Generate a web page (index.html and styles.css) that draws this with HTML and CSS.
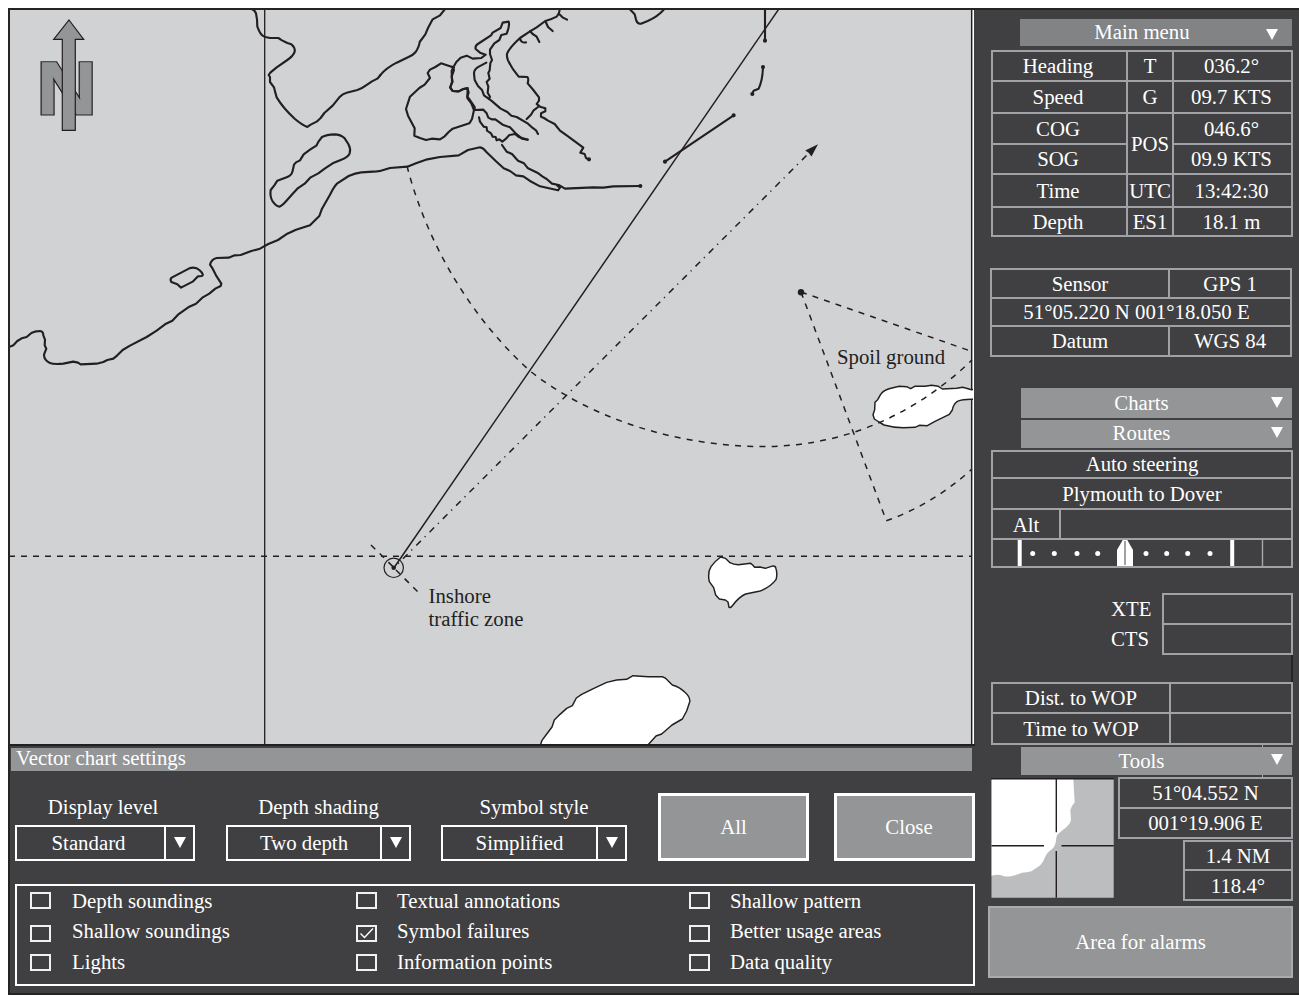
FILE: index.html
```html
<!DOCTYPE html>
<html lang="en">
<head>
<meta charset="utf-8">
<title>Vector chart display</title>
<link rel="stylesheet" href="styles.css">
</head>
<body>
<main class="ecdis">
  <section class="left">
    <svg class="map" width="963" height="734" viewBox="10 10 963 734">
      <!-- coastline, western half -->
      <g class="coast" transform="scale(.33333)">
        <path d="M752 26Q765 30 768 40L771 58 772 80 777 92Q784 108 796 111L810 114 835 114 846 121 862 129 874 133Q886 142 884 155Q880 168 862 180L830 202 811 218 806 225 810 231 810 246 822 262 826 278 830 292Q850 325 885 357Q905 374 922 381L932 374 950 365 962 354 973 339 998 317 1018 292Q1028 281 1040 278L1072 270Q1085 266 1098 256L1116 244 1132 236 1141 226"/>
        <path d="M966 411Q980 404 1003 403Q1022 403 1034 415L1045 432Q1053 446 1049 460Q1045 471 1024 479L998 490 974 506 955 520 932 532 914 551 892 566 874 586 858 604Q846 618 838 620Q828 618 818 604Q809 590 812 570L823 556 832 542 862 531Q876 526 878 512L882 494 888 487 900 481 911 463 930 449 949 437 956 424Z"/>
        <path d="M28 1041L40 1036 52 1023 65 1015 80 1011 94 999 104 995 120 993Q130 994 130 1006L135 1019 134 1036 139 1046 132 1064Q132 1080 150 1089Q162 1094 190 1091L220 1085 234 1088 242 1093 290 1091 310 1086 322 1080 340 1076 352 1066 368 1050 390 1037 440 1011 470 992 498 971 517 962 534 944 568 920 588 911 607 893 628 881 646 866 662 858 664 851 648 826 638 806 630 794Q634 778 650 774L686 773 704 766 722 765 754 753 780 746 805 732 834 720 862 701 888 689 930 676 958 648 966 626 990 584Q1002 560 1012 550L1046 528Q1066 519 1084 517L1130 514 1140 513"/>
        <path d="M515 833L568 805Q586 799 599 811Q614 825 605 828L594 829 578 845 543 863 532 853 514 846Q509 838 515 833Z"/>
      </g>
      <!-- harbour and eastern coastline -->
      <g class="coast" transform="translate(380 0) scale(.33333)">
        <path d="M0 226Q20 203 50 188L84 172Q100 165 107 156Q118 139 119 126L136 103 144 84 158 58 180 46 196 26"/>
        <path d="M0 513L30 504 82 500 108 490 142 478 180 471 236 466 264 450 300 442Q310 443 320 457L348 484 371 505 390 513 408 526 430 529 450 543 480 559 534 571 540 563 532 557"/>
        <path d="M366 435L380 455 396 462 414 482 432 490 444 505 472 518 488 530 500 537 516 551 536 555 555 566 640 562 670 563 700 559 780 558"/>
        <path d="M222 203L210 199 183 190 166 201 150 209 143 219 150 234 145 240 134 254 118 264 90 290 78 327 84 347 104 385 103 407 120 414 138 420 155 416 180 418 194 409 206 396 218 386 268 370 276 357 282 330 274 310 262 294 263 264 250 267 236 274 218 273 211 263 216 246 215 212 220 202 229 186 242 173 260 167 278 176 304 174 317 164 300 158 287 147Q284 136 298 129L333 106 338 98 362 84 368 68 386 65Q390 77 380 101L364 105 358 120 343 130 330 149 330 162 336 180 331 190 329 211 325 219 329 236 320 246 325 260 323 278 330 290 327 296"/>
        <path d="M216 200L222 210 215 230 218 245 210 262 218 273 236 274 250 267 262 265 266 277 262 290 270 300 284 321 284 330 310 329 320 340 325 353 335 358 346 358 368 374 390 382 406 399 426 416 443 419"/>
        <path d="M297 352L300 365 311 380 320 382 321 392 333 400 338 410 347 411 350 421 358 418 367 425 378 416 388 405 405 402 416 411 443 419"/>
        <path d="M319 188L298 199Q282 207 282 220L284 240 294 258 306 270 312 286 334 302 362 326 382 336 394 347 410 351 444 371 458 384 468 391 474 402"/>
        <path d="M539 26Q540 38 530 50Q515 58 496 63L470 82 450 94 420 114Q391 141 383 157Q378 165 384 181Q396 207 416 230L442 231Q447 236 443 250L460 270 477 292 477 302 470 312 480 320 496 325 496 334 483 340 483 350 492 354 504 362 524 372 540 392 560 406 610 443 601 458 614 462 618 474 627 479M478 318L460 332 453 344 440 357M420 114Q422 130 438 127M450 93L458 102 470 110 478 126M496 63L504 81 518 93M540 44L549 53 561 59"/>
        <path d="M748 26L764 43 769 62Q773 73 783 71L803 63Q835 49 853 27"/>
        <circle cx="781" cy="558" r="3"/><circle cx="627" cy="478" r="3"/>
      </g>
      <g class="coast" transform="translate(600 0) scale(.33333)">
        <path d="M495 26V122M489 201Q488 240 476 266L461 272 457 281M195 485L401 346"/>
        <circle cx="495" cy="122" r="3"/><circle cx="489" cy="201" r="3"/><circle cx="457" cy="282" r="3"/><circle cx="195" cy="485" r="3"/><circle cx="401" cy="346" r="3"/>
      </g>
      <!-- shoal areas -->
      <g class="shoal" transform="translate(680 320) scale(.33333)">
        <path d="M890 208L875 209 848 202 830 205 787 207 775 199 755 196 735 199 704 199 692 206 680 200 658 199 636 204Q612 209 602 223L593 239 585 247 584 269 579 284 583 297 597 306 612 315Q640 323 670 323L705 322 718 316 742 317 765 304 808 283 817 270Q820 252 832 244Q850 237 880 238H890"/>
        <path d="M122 711L136 715 150 728Q160 734 175 734L212 730 218 735 224 742 240 741 256 745 274 739Q286 735 288 746Q293 763 288 779Q270 803 237 814L197 822Q177 831 159 855Q152 865 147 862L144 846 136 840 118 837 107 825 101 803 88 785Q82 758 93 740Q104 724 122 711Z"/>
      </g>
      <path class="shoal" transform="translate(340 520) scale(.33333)" d="M601 676L606 661 618 645 636 621 643 600 660 583 680 565 697 557 709 534 725 523 760 506 800 487Q830 478 860 478L879 467 925 470 967 470Q977 472 984 482L997 495Q1020 502 1034 516Q1052 532 1049 546L1040 573 1027 597 996 615 965 642 948 648 923 676"/>
      <!-- graticule, range arcs and light sector -->
      <path class="thin" d="M264.7 10V744M971.6 10V390M971.6 399V744"/>
      <path class="dash grat" d="M10 556.2H972"/>
      <path class="dash" d="M407 166C426 240 468 315 530 371C592 420 680 446.5 763 446.5C850 446.5 920 410 972 360"/>
      <path class="dash" d="M801 292L972 351.5"/>
      <path class="dash" d="M801 292L886.3 520.7"/>
      <path class="dash" d="M886.3 520.7Q932 505 972 469"/>
      <circle cx="801" cy="292.3" r="3.2" fill="#231f20"/>
      <!-- own ship with heading line and course vector -->
      <path class="vector" d="M394 567.7L778.5 9.5"/>
      <path class="dash course" d="M806.5 155.5L394 567.7"/>
      <path fill="#231f20" d="M818 144.3L805.2 150.5 808.6 152.8 811.5 156.5Z"/>
      <path class="dash" d="M371 545L394 567.7M396 570L418 592"/>
      <circle cx="393.7" cy="567.8" r="9.7" fill="none" stroke="#231f20" stroke-width="1.2"/>
      <circle cx="393.7" cy="567.8" r="2.3" fill="#231f20"/>
      <!-- north marker -->
      <text class="north rim" aria-hidden="true" x="36.8" y="114.3" textLength="59.8" lengthAdjust="spacingAndGlyphs">N</text>
      <text class="north" x="36.8" y="114.3" textLength="59.8" lengthAdjust="spacingAndGlyphs">N</text>
      <path class="arrow" d="M69 20L83.7 39.3H75.3V130.3H62.3V39.3H53.7Z"/>
      <text class="note" x="837" y="363.7">Spoil ground</text>
      <text class="note" x="428.5" y="603">Inshore</text>
      <text class="note" x="428.5" y="626">traffic zone</text>
    </svg>

    <section class="settings">
      <h2 class="title">Vector chart settings</h2>
      <div class="controls">
        <div class="field level"><span class="label">Display level</span>
          <div class="select"><span>Standard</span><i><svg class="tri" viewBox="0 0 12 11"><path d="M0 0H12L6 11Z"/></svg></i></div></div>
        <div class="field shading"><span class="label">Depth shading</span>
          <div class="select"><span>Two depth</span><i><svg class="tri" viewBox="0 0 12 11"><path d="M0 0H12L6 11Z"/></svg></i></div></div>
        <div class="field style"><span class="label">Symbol style</span>
          <div class="select"><span>Simplified</span><i><svg class="tri" viewBox="0 0 12 11"><path d="M0 0H12L6 11Z"/></svg></i></div></div>
        <button class="btn all">All</button>
        <button class="btn close">Close</button>
      </div>
      <div class="options">
        <label class="first"><b class="box"></b>Depth soundings</label>
        <label><b class="box"></b>Textual annotations</label>
        <label><b class="box"></b>Shallow pattern</label>
        <label class="first mid"><b class="box"></b>Shallow soundings</label>
        <label class="mid"><b class="box"><svg width="18" height="13" viewBox="0 0 18 13"><path d="M2.5 6.5L6.5 10.5 15 1.5" fill="none" stroke="#fff" stroke-width="1.4"/></svg></b>Symbol failures</label>
        <label class="mid"><b class="box"></b>Better usage areas</label>
        <label class="first low"><b class="box"></b>Lights</label>
        <label class="low"><b class="box"></b>Information points</label>
        <label class="low"><b class="box"></b>Data quality</label>
      </div>
    </section>
  </section>

  <aside class="panel">
    <div class="bar main"><span>Main menu</span><svg class="tri" viewBox="0 0 12 11"><path d="M0 0H12L6 11Z"/></svg></div>
    <div class="grid nav">
      <div class="name">Heading</div><div>T</div><div class="val">036.2°</div>
      <div class="name">Speed</div><div>G</div><div class="val">09.7 KTS</div>
      <div class="name">COG</div><div class="pos">POS</div><div class="val">046.6°</div>
      <div class="name">SOG</div><div class="val">09.9 KTS</div>
      <div class="name">Time</div><div>UTC</div><div class="val">13:42:30</div>
      <div class="name">Depth</div><div>ES1</div><div class="val">18.1 m</div>
    </div>
    <div class="grid sensor">
      <div>Sensor</div><div>GPS 1</div>
      <div class="fix">51°05.220 N 001°18.050 E</div>
      <div>Datum</div><div>WGS 84</div>
    </div>
    <div class="bar charts"><span>Charts</span><svg class="tri" viewBox="0 0 12 11"><path d="M0 0H12L6 11Z"/></svg></div>
    <div class="bar routes"><span>Routes</span><svg class="tri" viewBox="0 0 12 11"><path d="M0 0H12L6 11Z"/></svg></div>
    <div class="grid auto">
      <div class="wide up">Auto steering</div>
      <div class="wide">Plymouth to Dover</div>
      <div class="down">Alt</div><div></div>
      <div class="wide">
        <svg width="298" height="26" viewBox="993 540 298 26">
          <path d="M1262.5 540V566" stroke="#a7a9ac" stroke-width="1.4"/>
          <path d="M1019.7 540V566M1232.2 540V566" stroke="#fff" stroke-width="4"/>
          <path d="M1122.7 540H1127.3L1133 550V566H1117V550Z" fill="#fff"/>
          <path d="M1125 541V565" stroke="#77797b" stroke-width="1.4"/>
          <g fill="#fff"><circle cx="1032.7" cy="553.6" r="2.5"/><circle cx="1054.3" cy="553.6" r="2.5"/><circle cx="1077" cy="553.6" r="2.5"/><circle cx="1097.7" cy="553.6" r="2.5"/><circle cx="1146" cy="553.6" r="2.5"/><circle cx="1166.7" cy="553.6" r="2.5"/><circle cx="1187.7" cy="553.6" r="2.5"/><circle cx="1210" cy="553.6" r="2.5"/></g>
        </svg>
      </div>
    </div>
    <div class="track">
      <div class="names"><span>XTE</span><span>CTS</span></div>
      <div class="grid pair"><div></div><div></div></div>
    </div>
    <div class="edge"></div>
    <div class="grid wop"><div>Dist. to WOP</div><div></div><div>Time to WOP</div><div></div></div>
    <div class="tick"></div>
    <div class="bar tools"><span>Tools</span><svg class="tri" viewBox="0 0 12 11"><path d="M0 0H12L6 11Z"/></svg></div>
    <div class="tick"></div>
    <div class="bottom">
      <svg class="inset" width="123" height="121" viewBox="991 777 123 121">
        <path d="M991.5 779H1113.7V897.7H991.5Z" fill="#bbbdbf"/>
        <path transform="translate(970 640) scale(.33333)" d="M65 417H310L314 487Q303 500 301 510L303 540Q300 555 278 570L262 584Q258 590 258 602Q255 622 243 630Q232 636 225 652Q218 670 208 678L184 694Q170 698 156 698L135 706Q115 712 100 708Q85 701 65 707Z" fill="#fff"/>
        <path d="M991 778.8H1114" stroke="#231f20" stroke-width="1.5"/>
        <path d="M1056.3 779V832.3M1056.3 851V897.7M991.5 845.7H1044M1061.5 845.7H1113.7" stroke="#231f20" stroke-width="1.4"/>
      </svg>
      <div class="reads">
        <div class="grid pair latlon"><div>51°04.552 N</div><div>001°19.906 E</div></div>
        <div class="grid pair range"><div>1.4 NM</div><div>118.4°</div></div>
      </div>
    </div>
    <div class="alarm">Area for alarms</div>
  </aside>
</main>
</body>
</html>
```
FILE: styles.css
```css
* { box-sizing: border-box; }
body {
  margin: 0;
  background: #fff;
  color: #fff;
  font: 20.8px/24px "Liberation Serif", "Times New Roman", serif;
  overflow: hidden;
}
.ecdis {
  display: grid;
  grid-template-columns: 965px 324px;
  margin: 8px 0 0 8px;
  width: 1291px;
  height: 987px;
  background: #404042;
  border: 2px solid #252324;
  border-right: 0;
}

/* chart */
.map {
  display: block;
  box-sizing: content-box;
  background: #d1d2d4;
  border-right: 1px solid #fff;
}
.coast { fill: none; stroke: #231f20; stroke-width: 6.4; stroke-linejoin: round; stroke-linecap: round; }
.coast circle { fill: #231f20; }
.shoal { fill: #fff; stroke: #231f20; stroke-width: 4.4; stroke-linejoin: round; }
.thin { fill: none; stroke: #231f20; stroke-width: 1.3; }
.vector { stroke: #231f20; stroke-width: 1.5; }
.dash { fill: none; stroke: #231f20; stroke-width: 1.5; stroke-dasharray: 6 6.2; }
.grat { stroke-dasharray: 6 6; stroke-dashoffset: 1px; }
.course { stroke-dasharray: 6.5 5.7 1.2 5.4; }
.north { font: bold 73.7px "Liberation Sans", Arial, sans-serif; fill: #939597; stroke: #939597; stroke-width: 1; }
.rim { stroke: #231f20; stroke-width: 3.2; }
.arrow { fill: #939597; stroke: #231f20; stroke-width: 1.2; }
.note { fill: #231f20; }

/* chart settings */
.settings { border-top: 2px solid #231f20; width: 965px; }
.title {
  margin: 2px 3px 0 1px;
  height: 23px;
  padding-left: 5px;
  background: #939597;
  font-size: 20.8px;
  font-weight: 400;
  line-height: 19px;
}
.controls { display: flex; margin-top: 22px; padding-left: 5px; height: 68px; }
.field { display: flex; flex-direction: column; gap: 6px; padding-top: 2px; }
.label { text-align: center; }
.level { width: 180px; }
.level .label { padding-right: 4px; }
.shading { width: 185px; margin-left: 31px; }
.style { width: 186px; margin-left: 30px; }
.select { display: flex; height: 36px; border: 2px solid #fff; line-height: 32px; }
.select span { flex: 1; text-align: center; }
.level .select span { padding-right: 4px; }
.select i { display: flex; align-items: center; justify-content: center; width: 29px; border-left: 2px solid #fff; }
.select .tri { margin: -1px 0 0 1px; }
.tri { width: 12px; height: 11px; fill: #fff; flex: none; }
.btn {
  padding: 0;
  border: 3px solid #fff;
  background: #939597;
  color: #fff;
  font: inherit;
}
.all { width: 151px; margin-left: 31px; }
.close { width: 141px; margin-left: 25px; padding-left: 9px; }
.options {
  display: grid;
  grid-template-columns: 326px 333px 1fr;
  grid-template-rows: 30px 31px 30px;
  margin: 23px 0 0 5px;
  height: 102px;
  border: 2px solid #fff;
  padding: 3px 0 0 13px;
}
.options label { display: flex; align-items: flex-start; }
.box { width: 21px; height: 17px; margin: 3px 20px 0 0; border: 2px solid #f1f1f2; flex: none; }
.first .box { margin-right: 21px; }
.box svg { display: block; }
.mid .box { margin-top: 6px; }
.low .box { margin-top: 4px; }

/* side panel */
.panel { display: flex; flex-direction: column; align-items: flex-start; }
.bar { display: flex; align-items: center; width: 271px; margin-left: 46px; background: #939597; }
.bar span { width: 241px; text-align: center; }
.bar .tri { margin: -1px 0 0 9px; }
.main { width: 272px; height: 27px; margin: 9px 0 0 45px; background: #828385; }
.main span { width: 244px; padding-bottom: 1px; }
.main .tri { margin: 3px 0 0 2px; }
.charts { height: 30px; margin-top: 31px; }
.routes { height: 28px; margin-top: 2px; }
.routes span { padding-bottom: 2px; }
.routes .tri, .tools .tri { margin-top: -3px; }
.tools { height: 28px; }
.grid { display: grid; gap: 2px; padding: 2px; background: #a0a2a5; text-align: center; }
.grid > div { display: flex; align-items: center; justify-content: center; background: #404042; overflow: hidden; }
.nav { margin: 4px 0 0 16px; grid-template-columns: 133px 44px 117px; grid-template-rows: 28px 30px 29px 28px 31px 27px; }
.nav .name { padding-right: 3px; }
.nav .val { padding-right: 2px; }
.nav .pos { grid-row: span 2; }
.sensor { margin: 31px 0 0 15px; grid-template-columns: 176px 120px; grid-template-rows: 27px 26px 28px; }
.sensor .fix { grid-column: span 2; padding-right: 9px; }
.auto { margin: 2px 0 0 16px; grid-template-columns: 66px 230px; grid-template-rows: 25px 29px 28px 26px; }
.auto .wide { grid-column: span 2; }
.auto .up { padding-bottom: 2px; }
.auto .down { padding-top: 2px; }
.track { display: flex; margin: 25px 0 0 136px; height: 62px; }
.names { display: flex; flex-direction: column; width: 51px; line-height: 30px; padding-top: 1px; }
.pair { grid-template-rows: 28px 28px; }
.track .pair { width: 131px; }
.edge { width: 2px; height: 27px; margin-left: 316px; background: #252324; }
.wop { margin-left: 16px; grid-template-columns: 176px 120px; grid-template-rows: 28px 29px; }
.tick { width: 1px; height: 2px; margin-left: 287px; background: #a7a9ac; }
.bottom { display: flex; gap: 4px; margin-left: 16px; }
.inset { display: block; }
.reads { display: flex; flex-direction: column; align-items: flex-end; gap: 1px; }
.latlon { width: 175px; }
.range { width: 110px; grid-template-rows: 27px 28px; }
.range > div { padding-top: 1px; }
.alarm {
  width: 305px;
  height: 72px;
  margin: 5px 0 0 13px;
  border: 2px solid #a9abad;
  background: #939597;
  line-height: 68px;
  text-align: center;
}
```
